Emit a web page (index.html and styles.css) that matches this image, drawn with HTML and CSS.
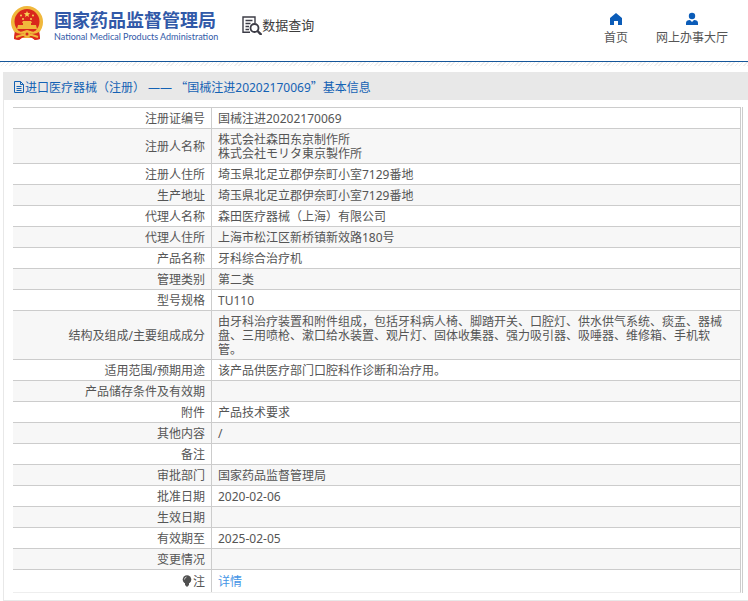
FILE: index.html
```html
<!DOCTYPE html>
<html lang="zh-CN">
<head>
<meta charset="utf-8">
<title>国家药品监督管理局 数据查询</title>
<link rel="stylesheet" href="styles.css">
</head>
<body>
<header class="header">
  <div class="brand">
    <svg class="emblem" viewBox="0 0 34 36" aria-hidden="true">
      <path fill="#dc2a1c" d="M5 25h24l1 8-5 1-3-2H12l-3 2-5-1z"/>
      <circle cx="17" cy="16" r="16" fill="#f0b83c"/>
      <circle cx="17" cy="15.500" r="12.500" fill="#d9261c"/>
      <path fill="#f7d154" d="M17 5l.9 2.100 2.300.2-1.800 1.500.6 2.200-2-1.200-2 1.200.6-2.200-1.800-1.500 2.300-.2z"/>
      <g fill="#f7d154"><circle cx="11" cy="9.500" r="1"/><circle cx="23" cy="9.500" r="1"/><circle cx="13" cy="13" r="1"/><circle cx="21" cy="13" r="1"/></g>
      <path fill="#f0b83c" d="M13 15h8l1 2h-1v2h5l1 4H7l1-4h5v-2h-1z"/>
      <path fill="#dc2a1c" d="M5 25q6 3 12 3t12-3l1 8-5 1-3-3H12l-3 3-5-1z"/>
      <path fill="none" stroke="#f0b83c" stroke-width="2" d="M5 25q5 3 9 1l3-1 3 1q4 2 9-1M6 31l6-2h10l6 2"/>
      <circle cx="17" cy="28" r="3.500" fill="#f0b83c"/>
      <circle cx="17" cy="28" r="1.500" fill="#d9261c"/>
    </svg>
    <div class="brand-text">
      <div class="brand-name">国家药品监督管理局</div>
      <div class="brand-en">National Medical Products Administration</div>
    </div>
  </div>
  <div class="section">
    <svg class="section-icon" viewBox="0 0 20 20" aria-hidden="true">
      <g fill="none" stroke="#3c3c46">
        <path stroke-width="1.400" d="M8 17.300H1V2h12v6M3.500 5.500h7M3.500 8.500h5M3.500 11.500h3.500M3.500 14.500h3.500"/>
        <circle cx="12.500" cy="13" r="4" stroke-width="1.800"/>
        <path stroke-width="2.400" d="M15.500 16l4 4"/>
      </g>
    </svg>
    <span>数据查询</span>
  </div>
  <nav class="nav">
    <a class="nav-link" href="#home">
      <svg class="nav-icon" viewBox="0 0 14 14" aria-hidden="true"><path fill="#0b5cb8" d="M7 1l6 5v7H9V9H5v4H1V6z"/></svg>
      <span>首页</span>
    </a>
    <a class="nav-link" href="#hall">
      <svg class="nav-icon" viewBox="0 0 14 14" aria-hidden="true"><circle cx="7" cy="4" r="3.200" fill="#0b5cb8"/><path fill="#0b5cb8" d="M1 13v-2q0-3 4-3l2 2 2-2q4 0 4 3v2z"/></svg>
      <span>网上办事大厅</span>
    </a>
  </nav>
</header>
<div class="hatch"></div>
<main class="panel">
  <h1 class="panel-title">
    <svg class="doc-icon" viewBox="0 0 12 12" aria-hidden="true"><path fill="none" stroke="#1462b4" d="M1.500.5h6l3 3v8h-9zM7.500.5v3h3M3.500 5.500h5M3.500 7.500h5M3.500 9.500h5"/></svg>
    <span>进口医疗器械（注册） —— <span class="quote">“</span>国械注进20202170069<span class="quote">”</span>基本信息</span>
  </h1>
  <div class="sheet">
    <table class="info">
      <tbody>
        <tr><th scope="row">注册证编号</th><td>国械注进20202170069</td></tr>
        <tr><th scope="row">注册人名称</th><td>株式会社森田东京制作所<br><span lang="ja">株式会社モリタ東京製作所</span></td></tr>
        <tr><th scope="row">注册人住所</th><td>埼玉県北足立郡伊奈町小室7129番地</td></tr>
        <tr><th scope="row">生产地址</th><td>埼玉県北足立郡伊奈町小室7129番地</td></tr>
        <tr><th scope="row">代理人名称</th><td>森田医疗器械（上海）有限公司</td></tr>
        <tr><th scope="row">代理人住所</th><td>上海市松江区新桥镇新效路180号</td></tr>
        <tr><th scope="row">产品名称</th><td>牙科综合治疗机</td></tr>
        <tr><th scope="row">管理类别</th><td>第二类</td></tr>
        <tr><th scope="row">型号规格</th><td>TU110</td></tr>
        <tr><th scope="row">结构及组成/主要组成成分</th><td>由牙科治疗装置和附件组成，包括牙科病人椅、脚踏开关、口腔灯、供水供气系统、痰盂、器械盘、三用喷枪、漱口给水装置、观片灯、固体收集器、强力吸引器、吸唾器、维修箱、手机软管。</td></tr>
        <tr><th scope="row">适用范围/预期用途</th><td>该产品供医疗部门口腔科作诊断和治疗用。</td></tr>
        <tr><th scope="row">产品储存条件及有效期</th><td></td></tr>
        <tr><th scope="row">附件</th><td>产品技术要求</td></tr>
        <tr><th scope="row">其他内容</th><td>/</td></tr>
        <tr><th scope="row">备注</th><td></td></tr>
        <tr><th scope="row">审批部门</th><td>国家药品监督管理局</td></tr>
        <tr><th scope="row">批准日期</th><td>2020-02-06</td></tr>
        <tr><th scope="row">生效日期</th><td></td></tr>
        <tr><th scope="row">有效期至</th><td>2025-02-05</td></tr>
        <tr><th scope="row">变更情况</th><td></td></tr>
        <tr class="note"><th scope="row"><svg class="bulb" viewBox="0 0 10 12" aria-hidden="true"><circle cx="5" cy="4.500" r="4.300" fill="#505050"/><path fill="#505050" d="M3 8h4v2L5 12 3 10z"/><path fill="none" stroke="#ccc" d="M2.500 4.500q0-2 2-2.500"/></svg>注</th><td><a class="detail" href="#detail">详情</a></td></tr>
      </tbody>
    </table>
  </div>
</main>
</body>
</html>
```
FILE: styles.css
```css
* {
  box-sizing: border-box;
}

body {
  margin: 0;
  background: #fff;
  color: #555;
  font: 12px/14px "Noto Sans", "Noto Sans CJK SC", sans-serif;
}

a {
  text-decoration: none;
}

svg {
  flex: none;
}

.header {
  display: flex;
  align-items: flex-start;
  height: 62px;
  padding: 0 20px 0 10px;
  border-bottom: 1px solid #15569a;
}

.brand {
  display: flex;
  gap: 10px;
  padding-top: 6px;
}

.emblem {
  width: 34px;
  height: 36px;
}

.brand-text {
  padding-top: 4px;
  color: #3159a8;
  white-space: nowrap;
}

.brand-name {
  font-size: 18px;
  font-weight: 700;
  line-height: 20px;
}

.brand-en {
  font: 9px/14px Lato, sans-serif;
}

.section {
  display: flex;
  align-items: center;
  padding: 15px 0 0 24px;
  color: #3c3c3c;
  font-size: 13px;
  line-height: 20px;
}

.section-icon {
  width: 20px;
  height: 20px;
}

.nav {
  display: flex;
  gap: 28px;
  margin-left: auto;
  padding-top: 12px;
}

.nav-link {
  display: flex;
  flex-direction: column;
  align-items: center;
  gap: 4px;
  color: #555;
  line-height: 16px;
}

.nav-icon {
  width: 14px;
  height: 14px;
}

.hatch {
  height: 4px;
  background: repeating-linear-gradient(135deg, #eee 0 1px, #fff 1px 3px);
}

.panel {
  margin: 6px 0 0 3px;
  padding-bottom: 7px;
  border: solid #e8e8e8;
  border-width: 0 0 1px 1px;
}

.panel-title {
  display: flex;
  align-items: center;
  height: 28px;
  margin: 0;
  padding: 2px 0 0 9px;
  background: #e8e8e8;
  color: #1462b4;
  font-size: 12px;
  font-weight: 400;
}

.quote {
  font-family: "Noto Sans CJK SC", sans-serif;
}

.doc-icon {
  width: 12px;
  height: 12px;
}

.sheet {
  margin: 7px 5px 0 9px;
  padding-right: 1px;
  border-right: 1px solid #ccc;
}

.info {
  width: 100%;
  border-right: 1px solid #ccc;
  border-bottom: 1px solid #eee;
  border-spacing: 0;
}

.info th,
.info td {
  height: 21px;
  padding: 4px 6px 2px;
  border-top: 1px solid #ccc;
  text-align: left;
  vertical-align: middle;
}

.info th {
  width: 198px;
  padding-left: 0;
  font-weight: 400;
  text-align: right;
  white-space: nowrap;
}

.info td {
  padding-right: 12px;
  border-left: 1px solid #ccc;
}

.info tr:nth-child(even) {
  background: #f7f7f7;
}

.info .note th,
.info .note td {
  height: 23px;
}

.bulb {
  width: 10px;
  height: 12px;
  margin-right: 1px;
  vertical-align: -1px;
}

.detail {
  color: #4595e6;
}

:lang(ja) {
  font-family: "Noto Sans", "Noto Sans CJK JP", sans-serif;
}
```
